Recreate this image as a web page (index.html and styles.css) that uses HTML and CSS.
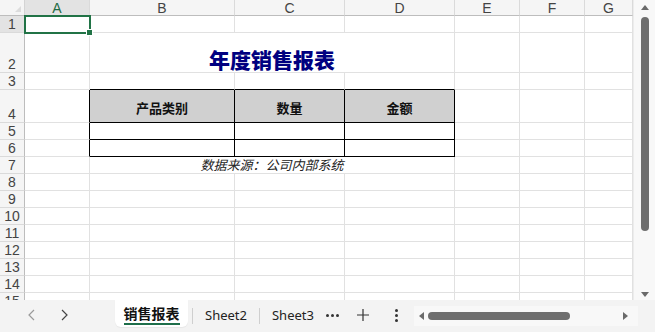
FILE: index.html
```html
<!DOCTYPE html>
<html>
<head>
<meta charset="utf-8">
<link rel="stylesheet" href="styles.css">
</head>
<body>
<div class="app">
  <div class="main">
    <div class="sheet">
      <div class="corner"><span class="tri"></span></div>
      <div class="ch sel">A</div><div class="ch">B</div><div class="ch">C</div><div class="ch">D</div><div class="ch">E</div><div class="ch">F</div><div class="ch">G</div>

      <div class="rh sel">1</div><div class="c active"></div><div class="c"></div><div class="c"></div><div class="c"></div><div class="c"></div><div class="c"></div><div class="c"></div>

      <div class="rh">2</div><div class="c"></div><div class="c title span3">年度销售报表</div><div class="c"></div><div class="c"></div><div class="c"></div>

      <div class="rh">3</div><div class="c"></div><div class="c bb"></div><div class="c bb"></div><div class="c bb"></div><div class="c"></div><div class="c"></div><div class="c"></div>

      <div class="rh">4</div><div class="c br"></div><div class="c tb th">产品类别</div><div class="c tb th">数量</div><div class="c tb th">金额</div><div class="c"></div><div class="c"></div><div class="c"></div>

      <div class="rh">5</div><div class="c br"></div><div class="c tb"></div><div class="c tb"></div><div class="c tb"></div><div class="c"></div><div class="c"></div><div class="c"></div>

      <div class="rh">6</div><div class="c br"></div><div class="c tb"></div><div class="c tb"></div><div class="c tb"></div><div class="c"></div><div class="c"></div><div class="c"></div>

      <div class="rh">7</div><div class="c"></div><div class="c note span3">数据来源：公司内部系统</div><div class="c"></div><div class="c"></div><div class="c"></div>

      <div class="rh">8</div><div class="c"></div><div class="c"></div><div class="c"></div><div class="c"></div><div class="c"></div><div class="c"></div><div class="c"></div>
      <div class="rh">9</div><div class="c"></div><div class="c"></div><div class="c"></div><div class="c"></div><div class="c"></div><div class="c"></div><div class="c"></div>
      <div class="rh">10</div><div class="c"></div><div class="c"></div><div class="c"></div><div class="c"></div><div class="c"></div><div class="c"></div><div class="c"></div>
      <div class="rh">11</div><div class="c"></div><div class="c"></div><div class="c"></div><div class="c"></div><div class="c"></div><div class="c"></div><div class="c"></div>
      <div class="rh">12</div><div class="c"></div><div class="c"></div><div class="c"></div><div class="c"></div><div class="c"></div><div class="c"></div><div class="c"></div>
      <div class="rh">13</div><div class="c"></div><div class="c"></div><div class="c"></div><div class="c"></div><div class="c"></div><div class="c"></div><div class="c"></div>
      <div class="rh">14</div><div class="c"></div><div class="c"></div><div class="c"></div><div class="c"></div><div class="c"></div><div class="c"></div><div class="c"></div>
      <div class="rh">15</div><div class="c"></div><div class="c"></div><div class="c"></div><div class="c"></div><div class="c"></div><div class="c"></div><div class="c"></div>
    </div>
    <div class="vscroll">
      <span class="arr up"></span>
      <div class="vthumb"></div>
      <span class="arr down"></span>
    </div>
  </div>
  <div class="bar">
    <div class="nav">
      <svg width="10" height="12" viewBox="0 0 10 12"><path d="M7 1 L2 6 L7 11" fill="none" stroke="#9a9a9a" stroke-width="1.2"/></svg>
      <svg width="10" height="12" viewBox="0 0 10 12"><path d="M3 1 L8 6 L3 11" fill="none" stroke="#444" stroke-width="1.2"/></svg>
    </div>
    <div class="tab on"><span>销售报表</span></div>
    <div class="sep sep1"></div>
    <div class="tab">Sheet2</div>
    <div class="sep"></div>
    <div class="tab">Sheet3</div>
    <div class="more"><i></i><i></i><i></i></div>
    <div class="plus">
      <svg width="14" height="14" viewBox="0 0 14 14"><path d="M7 1 V13 M1 7 H13" stroke="#333" stroke-width="1.2"/></svg>
    </div>
    <div class="kebab"><i></i><i></i><i></i></div>
    <div class="hscroll">
      <span class="harr left"></span>
      <div class="hthumb"></div>
      <span class="harr right"></span>
    </div>
  </div>
</div>
</body>
</html>
```

FILE: styles.css
```css
* { box-sizing: border-box; }
html, body { margin: 0; padding: 0; }
body {
  width: 655px;
  height: 332px;
  overflow: hidden;
  background: #fff;
  font-family: "Open Sans", "Noto Sans", "Noto Sans CJK SC", sans-serif;
}
.app {
  display: flex;
  flex-direction: column;
  height: 332px;
}
.main {
  display: flex;
  height: 300px;
  overflow: hidden;
}
.sheet {
  display: grid;
  grid-template-columns: 25px 65px 145px 110px 110px 65px 65px 48px;
  grid-template-rows: 16px 17px 40px 17px 33px repeat(10, 17px) 17px;
  width: 633px;
  height: 300px;
  overflow: hidden;
  align-content: start;
}
.corner {
  background: #f5f5f5;
  border-right: 1px solid #d4d4d4;
  border-bottom: 1px solid #bdbdbd;
  position: relative;
}
.corner .tri {
  position: absolute;
  right: 3px;
  bottom: 3px;
  width: 0; height: 0;
  border-left: 6px solid transparent;
  border-bottom: 6px solid #dcdcdc;
}
.ch {
  background: #f5f5f5;
  border-right: 1px solid #dadada;
  border-bottom: 1px solid #bdbdbd;
  font-family: "Liberation Sans", Arial, sans-serif;
  font-size: 14px;
  color: #444;
  display: flex;
  align-items: center;
  justify-content: center;
  line-height: 1;
}
.ch.sel { background: #e3e3e3; color: #1f6b45; }
.rh {
  background: #f5f5f5;
  border-right: 1px solid #bdbdbd;
  border-bottom: 1px solid #dadada;
  font-family: "Liberation Sans", Arial, sans-serif;
  font-size: 14px;
  color: #444;
  display: flex;
  align-items: flex-end;
  justify-content: center;
  padding-bottom: 1px;
  line-height: 1;
}
.rh.sel { background: #e3e3e3; }
.c {
  border-right: 1px solid #e1e1e1;
  border-bottom: 1px solid #e1e1e1;
  background: #fff;
}
.c.active {
  position: relative;
  border: none;
}
.c.active::after {
  content: "";
  position: absolute;
  left: -1px; top: -1px; right: -1px; bottom: -1px;
  border: 2px solid #217346;
}
.c.active::before {
  content: "";
  position: absolute;
  right: -3px; bottom: -3px;
  width: 5px; height: 5px;
  background: #217346;
  border: 1px solid #fff;
  z-index: 2;
}
.span3 { grid-column: span 3; }
.title {
  display: flex;
  align-items: flex-end;
  justify-content: center;
  font-family: "Noto Sans CJK SC", sans-serif;
  font-weight: 900;
  font-size: 21px;
  color: #000080;
  padding-bottom: 0px;
  line-height: 26px;
}
.bb { border-bottom-color: #000; }
.br { border-right-color: #000; }
.tb { border-right-color: #000; border-bottom-color: #000; }
.th {
  background: #d0d0d0;
  display: flex;
  align-items: flex-end;
  justify-content: center;
  font-family: "Noto Sans CJK SC", sans-serif;
  font-weight: 700;
  font-size: 13px;
  color: #111;
  padding-bottom: 6px;
  line-height: 16px;
}
.note {
  display: flex;
  align-items: center;
  justify-content: center;
  font-family: "Noto Sans CJK SC", sans-serif;
  font-style: italic;
  font-size: 13px;
  color: #222;
  line-height: 16px;
}
.vscroll {
  width: 22px;
  height: 300px;
  background: #f8f8f8;
  border-left: 1px solid #ececec;
  position: relative;
  display: flex;
  flex-direction: column;
  align-items: center;
}
.arr {
  width: 0; height: 0;
  border-left: 4px solid transparent;
  border-right: 4px solid transparent;
}
.arr.up { border-bottom: 5px solid #6a6a6a; margin-top: 5px; }
.arr.down { border-top: 5px solid #6a6a6a; margin-top: auto; margin-bottom: 3px; }
.vthumb {
  width: 8px;
  height: 214px;
  margin-top: 7px;
  background: #6e6e6e;
  border-radius: 4px;
}
.bar {
  height: 32px;
  background: #f3f3f3;
  display: flex;
  align-items: flex-start;
  font-family: "Noto Sans", "Noto Sans CJK SC", sans-serif;
  font-size: 13px;
  color: #222;
}
.nav {
  display: flex;
  gap: 22px;
  padding-left: 27px;
  width: 115px;
  height: 30px;
  align-items: center;
}
.tab {
  height: 30px;
  display: flex;
  align-items: center;
  padding: 0 12px;
  font-size: 13px;
  color: #222;
}
.tab.on {
  background: #fff;
  width: 73px;
  justify-content: center;
  padding: 0;
  border-radius: 0 0 6px 6px;
  height: 27px;
  box-shadow: 0 1px 1px rgba(0,0,0,0.05);
}
.tab.on span {
  font-family: "Noto Sans CJK SC", sans-serif;
  font-weight: 700;
  font-size: 14px;
  color: #111;
  border-bottom: 2px solid #1e6e4a;
  line-height: 17px;
  padding-bottom: 1px;
  margin-top: 2px;
}
.sep {
  width: 1px;
  height: 16px;
  background: #cfcfcf;
  margin-top: 8px;
}
.sep1 { margin-left: 4px; }
.more {
  display: flex;
  gap: 2px;
  align-items: center;
  height: 30px;
  width: 24px;
}
.more i { width: 3px; height: 3px; border-radius: 50%; background: #333; display: block; }
.plus {
  height: 30px;
  display: flex;
  align-items: center;
  margin-left: 6px;
}
.kebab {
  height: 30px;
  display: flex;
  flex-direction: column;
  justify-content: center;
  gap: 2px;
  margin-left: 25px;
}
.kebab i { width: 3px; height: 3px; border-radius: 50%; background: #333; display: block; }
.hscroll {
  margin-left: 16px;
  margin-top: 6px;
  width: 224px;
  height: 20px;
  background: #f8f8f8;
  display: flex;
  align-items: center;
  padding: 0 10px 0 5px;
}
.harr { width: 0; height: 0; border-top: 4px solid transparent; border-bottom: 4px solid transparent; }
.harr.left { border-right: 5px solid #6a6a6a; }
.harr.right { border-left: 5px solid #6a6a6a; margin-left: auto; }
.hthumb {
  width: 142px;
  height: 8px;
  background: #6e6e6e;
  border-radius: 4px;
  margin-left: 4px;
}
```
